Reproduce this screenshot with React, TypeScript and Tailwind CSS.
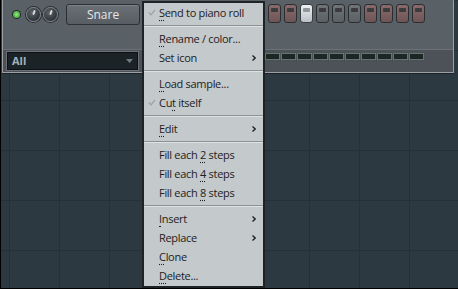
import React from "react";

const STEPS = ["red", "red", "lit", "off", "off", "off", "red", "red", "red", "red"];

const stepStyle: Record<string, string> = {
  red: "bg-[linear-gradient(#8a6a6c,#6e5557)] border-[#2a2e31]",
  lit: "bg-[linear-gradient(#eef2f4,#b9c0c4)] border-[#3a4044]",
  off: "bg-[linear-gradient(#6f7478,#5b6064)] border-[#2a2e31]",
};

type Item =
  | { type: "sep" }
  | { type: "item"; pre: string; key?: string; post?: string; check?: boolean; sub?: boolean };

const MENU: Item[] = [
  { type: "item", pre: "", key: "S", post: "end to piano roll", check: true },
  { type: "sep" },
  { type: "item", pre: "", key: "R", post: "ename / color..." },
  { type: "item", pre: "Set icon", sub: true },
  { type: "sep" },
  { type: "item", pre: "", key: "L", post: "oad sample..." },
  { type: "item", pre: "Cu", key: "t", post: " itself", check: true },
  { type: "sep" },
  { type: "item", pre: "", key: "E", post: "dit", sub: true },
  { type: "sep" },
  { type: "item", pre: "Fill each ", key: "2", post: " steps" },
  { type: "item", pre: "Fill each ", key: "4", post: " steps" },
  { type: "item", pre: "Fill each ", key: "8", post: " steps" },
  { type: "sep" },
  { type: "item", pre: "", key: "I", post: "nsert", sub: true },
  { type: "item", pre: "Replace", sub: true },
  { type: "item", pre: "", key: "C", post: "lone" },
  { type: "item", pre: "", key: "D", post: "elete..." },
];

const Knob = () => (
  <div className="w-[15px] h-[15px] rounded-full bg-[radial-gradient(circle_at_40%_35%,#5d6367,#1c2023)] border border-[#7c8388] shadow-[0_0_0_1px_#2c3134] relative">
    <div className="absolute left-[6px] top-[2px] w-[2px] h-[5px] bg-[#d9dde0] rounded-full rotate-[20deg]" />
  </div>
);

const ContextMenu = () => (
  <div className="absolute left-[141px] top-[1px] w-[123px] h-[287px] bg-[#c4c9cb] border-2 border-[#1e2326] font-['Open_Sans',sans-serif] text-[11px] tracking-[-0.3px] text-[#1d2124]">
    {MENU.map((m, i) =>
      m.type === "sep" ? (
        <div key={i} className="h-[7px] flex flex-col justify-center">
          <div className="h-px bg-[#8d9295]" />
          <div className="h-px bg-[#dfe2e3]" />
        </div>
      ) : (
        <div key={i} className="h-[19px] flex items-center relative pl-[15px] leading-none">
          {m.check && (
            <svg className="absolute left-[4px] top-[6px]" width="8" height="7" viewBox="0 0 8 7">
              <path d="M1 3.5 L3 5.8 L7 0.8" stroke="#9aa0a3" strokeWidth="1.2" fill="none" />
            </svg>
          )}
          <span className="-mt-px">
            {m.pre}
            {m.key && <span className="underline decoration-dotted underline-offset-[3px]">{m.key}</span>}
            {m.post}
          </span>
          {m.sub && (
            <svg className="absolute right-[7px] top-[7px]" width="4" height="6" viewBox="0 0 4 6">
              <path d="M0.5 0.5 L3.2 3 L0.5 5.5" stroke="#1d2124" strokeWidth="1.3" fill="none" />
            </svg>
          )}
        </div>
      )
    )}
  </div>
);

export default function App() {
  return (
    <div className="relative w-[458px] h-[289px] overflow-hidden border-l border-b border-black bg-[#2d3941] bg-[linear-gradient(to_right,#25303a_1px,transparent_1px),linear-gradient(to_bottom,#25303a_1px,transparent_1px)] bg-[size:50px_50px] bg-[position:8px_0px] font-['Open_Sans',sans-serif]">
      <div className="ml-px w-[452px] h-[73px] bg-[#596066] border-l border-r border-b border-[#9aa0a3] flex flex-col shadow-[0_1px_0_#1c2226]">
        {/* top row */}
        <div className="h-[49px] flex items-start pt-[4px]">
          <div className="mt-[7px] ml-[10px] w-[7px] h-[7px] rounded-full bg-[radial-gradient(circle,#8cf27a,#2e8a2a)] shadow-[0_0_0_1px_#23282b]" />
          <div className="flex gap-[2px] ml-[6px] mt-[3px]">
            <Knob />
            <Knob />
          </div>
          <div className="ml-[8px] w-[74px] h-[21px] rounded-[3px] border border-[#2b3033] bg-[linear-gradient(#6a7075,#575d62)] shadow-[inset_0_1px_0_#7d8489] flex items-center justify-center text-[12px] text-[#e4e7e9]">
            Snare
          </div>
          <div className="flex gap-[3px] ml-[128px]">
            {STEPS.map((s, i) => (
              <div key={i} className={`w-[13px] h-[19px] rounded-[3px] border ${stepStyle[s]} flex justify-center pt-[3px]`}>
                <div className={`w-[7px] h-[4px] rounded-[1px] ${s === "lit" ? "bg-[#8f979c]" : "bg-[#3b3a3c]"}`} />
              </div>
            ))}
          </div>
        </div>
        {/* bottom strip */}
        <div className="flex-1 bg-[#4c5258] border-t border-[#6b7176] flex items-start pt-[2px]">
          <div className="ml-[4px] w-[131px] h-[18px] bg-[#1c2327] border border-[#0d1113] shadow-[0_0_0_1px_#6b7176] flex items-center px-[4px] justify-between">
            <span className="text-[11px] font-bold text-[#a3b2bc]">All</span>
            <svg width="7" height="4" viewBox="0 0 7 4">
              <path d="M0 0 H7 L3.5 4 Z" fill="#6f7b83" />
            </svg>
          </div>
          <div className="flex gap-px ml-[127px] mt-[1px]">
            {Array.from({ length: 10 }).map((_, i) => (
              <div key={i} className="w-[15px] h-[7px] border border-[#66746f] bg-[#1c2624]" />
            ))}
          </div>
        </div>
      </div>
      <ContextMenu />
    </div>
  );
}
